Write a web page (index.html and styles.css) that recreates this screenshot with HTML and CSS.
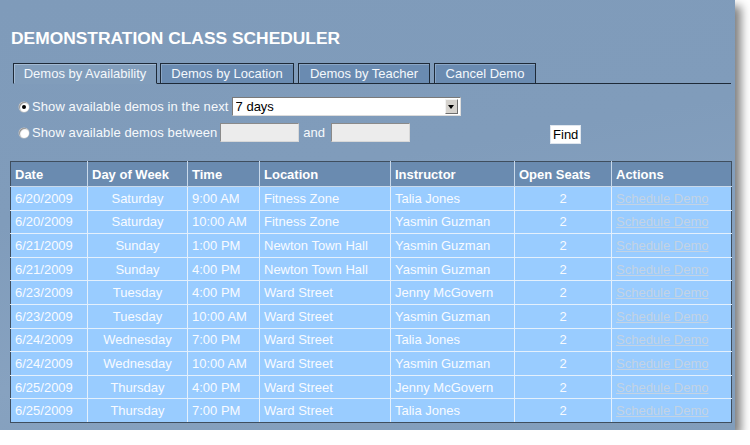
FILE: index.html
```html
<!DOCTYPE html>
<html>
<head>
<meta charset="utf-8">
<link rel="stylesheet" href="styles.css">
</head>
<body>
<div class="panel">
  <h1 class="title">DEMONSTRATION CLASS SCHEDULER</h1>
  <div class="tabs">
    <span class="tab active t1">Demos by Availability</span>
    <span class="tab t2">Demos by Location</span>
    <span class="tab t3">Demos by Teacher</span>
    <span class="tab t4">Cancel Demo</span>
  </div>
  <div class="form">
    <div class="row row-next">
      <input type="radio" class="radio" name="mode" checked>
      <label class="lbl">Show available demos in the next</label>
      <span class="select-wrap">
        <select class="select"><option>7 days</option></select>
        <span class="arrow"></span>
      </span>
    </div>
    <div class="row row-between">
      <input type="radio" class="radio" name="mode">
      <label class="lbl">Show available demos between</label>
      <input type="text" class="box">
      <span class="and">and</span>
      <input type="text" class="box">
      <button class="find">Find</button>
    </div>
  </div>
  <table class="grid">
    <colgroup>
      <col class="c1"><col class="c2"><col class="c3"><col class="c4"><col class="c5"><col class="c6"><col class="c7">
    </colgroup>
    <thead>
      <tr><th>Date</th><th>Day of Week</th><th>Time</th><th>Location</th><th>Instructor</th><th>Open Seats</th><th>Actions</th></tr>
    </thead>
    <tbody>
      <tr><td>6/20/2009</td><td class="ctr">Saturday</td><td>9:00 AM</td><td>Fitness Zone</td><td>Talia Jones</td><td class="ctr">2</td><td><a class="link">Schedule Demo</a></td></tr>
      <tr><td>6/20/2009</td><td class="ctr">Saturday</td><td>10:00 AM</td><td>Fitness Zone</td><td>Yasmin Guzman</td><td class="ctr">2</td><td><a class="link">Schedule Demo</a></td></tr>
      <tr><td>6/21/2009</td><td class="ctr">Sunday</td><td>1:00 PM</td><td>Newton Town Hall</td><td>Yasmin Guzman</td><td class="ctr">2</td><td><a class="link">Schedule Demo</a></td></tr>
      <tr><td>6/21/2009</td><td class="ctr">Sunday</td><td>4:00 PM</td><td>Newton Town Hall</td><td>Yasmin Guzman</td><td class="ctr">2</td><td><a class="link">Schedule Demo</a></td></tr>
      <tr><td>6/23/2009</td><td class="ctr">Tuesday</td><td>4:00 PM</td><td>Ward Street</td><td>Jenny McGovern</td><td class="ctr">2</td><td><a class="link">Schedule Demo</a></td></tr>
      <tr><td>6/23/2009</td><td class="ctr">Tuesday</td><td>10:00 AM</td><td>Ward Street</td><td>Yasmin Guzman</td><td class="ctr">2</td><td><a class="link">Schedule Demo</a></td></tr>
      <tr><td>6/24/2009</td><td class="ctr">Wednesday</td><td>7:00 PM</td><td>Ward Street</td><td>Talia Jones</td><td class="ctr">2</td><td><a class="link">Schedule Demo</a></td></tr>
      <tr><td>6/24/2009</td><td class="ctr">Wednesday</td><td>10:00 AM</td><td>Ward Street</td><td>Yasmin Guzman</td><td class="ctr">2</td><td><a class="link">Schedule Demo</a></td></tr>
      <tr><td>6/25/2009</td><td class="ctr">Thursday</td><td>4:00 PM</td><td>Ward Street</td><td>Jenny McGovern</td><td class="ctr">2</td><td><a class="link">Schedule Demo</a></td></tr>
      <tr><td>6/25/2009</td><td class="ctr">Thursday</td><td>7:00 PM</td><td>Ward Street</td><td>Talia Jones</td><td class="ctr">2</td><td><a class="link">Schedule Demo</a></td></tr>
    </tbody>
  </table>
</div>
</body>
</html>
```

FILE: styles.css
```css
html, body {
  margin: 0;
  padding: 0;
  background: #ffffff;
}
body {
  font-family: "Liberation Sans", Arial, sans-serif;
  font-size: 13px;
  color: #ffffff;
}
.panel {
  width: 735px;
  height: 430px;
  box-sizing: border-box;
  padding: 29px 0 0 10px;
  background: linear-gradient(170deg, #7f9bba 0%, #809cbb 40%, #87a2c0 70%, #819dbb 100%);
  box-shadow: 6px 6px 9px rgba(0, 0, 0, 0.5);
}
.title {
  margin: 0 0 0 1px;
  font-size: 17.4px;
  line-height: 19px;
  font-weight: bold;
  color: #ffffff;
}
.tabs {
  display: flex;
  margin: 15px 0 0 3px;
  width: 718px;
  border-bottom: 1px solid #1e2a38;
  height: 20px;
}
.tab {
  display: block;
  box-sizing: border-box;
  height: 21px;
  padding: 2px 0 2px 0;
  text-align: center;
  line-height: 15px;
  border: 1px solid #1e2a38;
  background: #6a8bb1;
  color: #f4f8fc;
  white-space: nowrap;
  box-shadow: inset 1px 1px 0 #8aa6c6;
}
.t1 { width: 144px; }
.t2 { width: 134px; margin-left: 3px; }
.t3 { width: 132px; margin-left: 4px; }
.t4 { width: 102px; margin-left: 4px; }
.tab.active {
  background: #819dbb;
  border-bottom-color: #819dbb;
  box-shadow: inset 1px 1px 0 #a3bad3;
}
.form {
  margin: 13px 0 0 9px;
  display: flex;
  flex-direction: column;
  gap: 7px;
}
.row {
  display: flex;
  align-items: center;
  height: 19px;
}
.radio {
  appearance: none;
  -webkit-appearance: none;
  width: 10px;
  height: 10px;
  margin: 0 3px 0 0;
  border-radius: 50%;
  background: #ffffff;
  border: none;
  box-shadow: inset 1px 1px 1px #8d8d8d, 0 0 0 0.5px #c8c8c8;
  position: relative;
}
.radio:checked::after {
  content: "";
  position: absolute;
  left: 3px;
  top: 3px;
  width: 4px;
  height: 4px;
  border-radius: 50%;
  background: #000000;
}
.lbl {
  color: #f6f9fc;
  white-space: nowrap;
  letter-spacing: 0.09px;
}
.select-wrap {
  position: relative;
  margin-left: 3px;
  display: block;
  width: 229px;
  height: 19px;
}
.select {
  appearance: none;
  -webkit-appearance: none;
  width: 229px;
  height: 19px;
  box-sizing: border-box;
  margin: 0;
  padding: 0 0 0 3px;
  font-family: "Liberation Sans", Arial, sans-serif;
  font-size: 13px;
  color: #000000;
  background: #ffffff;
  border: 1px solid #7a7a7a;
  border-right-color: #dcdcdc;
  border-bottom-color: #dcdcdc;
  border-radius: 0;
}
.arrow {
  position: absolute;
  right: 3px;
  top: 2px;
  width: 13px;
  height: 15px;
  background: #d6d3ce;
  border: 1px solid;
  border-color: #f2f2f2 #6e6e6e #6e6e6e #f2f2f2;
  box-sizing: border-box;
}
.arrow::after {
  content: "";
  position: absolute;
  left: 2px;
  top: 5px;
  border-left: 3.5px solid transparent;
  border-right: 3.5px solid transparent;
  border-top: 4px solid #000000;
}
.row-between .lbl {
  margin-right: 3px;
}
.box {
  width: 79px;
  height: 19px;
  box-sizing: border-box;
  margin: 0;
  padding: 0;
  background: #ececec;
  border: 1px solid #8a8a8a;
  border-right-color: #d8d8d8;
  border-bottom-color: #d8d8d8;
}
.and {
  margin: 0 6px 0 4px;
  color: #f6f9fc;
}
.find {
  margin: 4px 0 0 140px;
  height: 19px;
  padding: 0 2px;
  background: #ffffff;
  border: 1px solid #dfe6ee;
  font-family: "Liberation Sans", Arial, sans-serif;
  font-size: 13px;
  color: #000000;
}
.grid {
  margin-top: 19px;
  width: 721px;
  border-collapse: collapse;
  table-layout: fixed;
  border: 1px solid #3f4e5e;
}
.c1 { width: 77px; }
.c2 { width: 100px; }
.c3 { width: 72px; }
.c4 { width: 131px; }
.c5 { width: 124px; }
.c6 { width: 97px; }
.c7 { width: 120px; }
.grid th {
  height: 24px;
  padding: 0 4px;
  text-align: left;
  font-weight: bold;
  background: #6a8bb0;
  color: #ffffff;
  border: 1px solid #c9d9ea;
  border-top-color: #3f4e5e;
  white-space: nowrap;
}
.grid th:first-child { border-left-color: #3f4e5e; }
.grid th:last-child { border-right-color: #3f4e5e; }
.grid td {
  height: 22.6px;
  padding: 0 4px;
  background: #99ccff;
  color: #f8fbff;
  border: 1px solid #e4f0fc;
  white-space: nowrap;
}
.grid td:first-child { border-left-color: #3f4e5e; }
.grid td:last-child { border-right-color: #3f4e5e; }
.grid tr:last-child td { border-bottom-color: #3f4e5e; }
.grid .ctr {
  text-align: center;
}
.link {
  color: #c3d3e4;
  text-decoration: underline;
}
```
